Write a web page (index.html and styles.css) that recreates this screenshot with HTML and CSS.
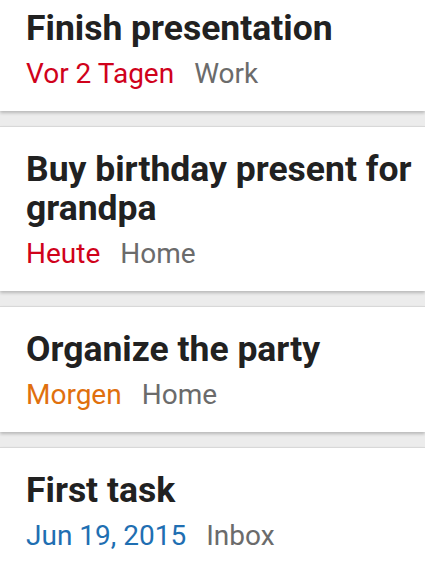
FILE: index.html
```html
<!DOCTYPE html>
<html>
<head>
<meta charset="utf-8">
<link rel="stylesheet" href="styles.css">
</head>
<body>
<div class="list">
  <div class="card">
    <div class="title">Finish presentation</div>
    <div class="meta"><span class="due overdue">Vor 2 Tagen</span><span class="project">Work</span></div>
  </div>
  <div class="card">
    <div class="title">Buy birthday present for grandpa</div>
    <div class="meta"><span class="due overdue">Heute</span><span class="project">Home</span></div>
  </div>
  <div class="card">
    <div class="title">Organize the party</div>
    <div class="meta"><span class="due soon">Morgen</span><span class="project">Home</span></div>
  </div>
  <div class="card">
    <div class="title">First task</div>
    <div class="meta"><span class="due later">Jun 19, 2015</span><span class="project">Inbox</span></div>
  </div>
</div>
</body>
</html>
```
FILE: styles.css
```css
html, body {
  margin: 0;
  padding: 0;
  background: #ececec;
  font-family: Roboto, "Liberation Sans", sans-serif;
  overflow: hidden;
}
.list {
  display: flex;
  flex-direction: column;
  gap: 15px;
  margin-top: -15px;
}
.card {
  background: #fff;
  padding: 23px 6px 21px 26px;
  border-top: 1px solid #d8d8d8;
  box-shadow: 0 2px 3px rgba(0,0,0,0.22);
}
.title {
  font-size: 35.5px;
  font-weight: 700;
  line-height: 38.3px;
  color: #212121;
}
.meta {
  margin-top: 10px;
  font-size: 28px;
  line-height: 33px;
  display: flex;
  gap: 20px;
}
.project { color: #6b6b6b; }
.overdue { color: #d0021b; }
.soon { color: #e0700e; }
.later { color: #1f6fb2; }
```
